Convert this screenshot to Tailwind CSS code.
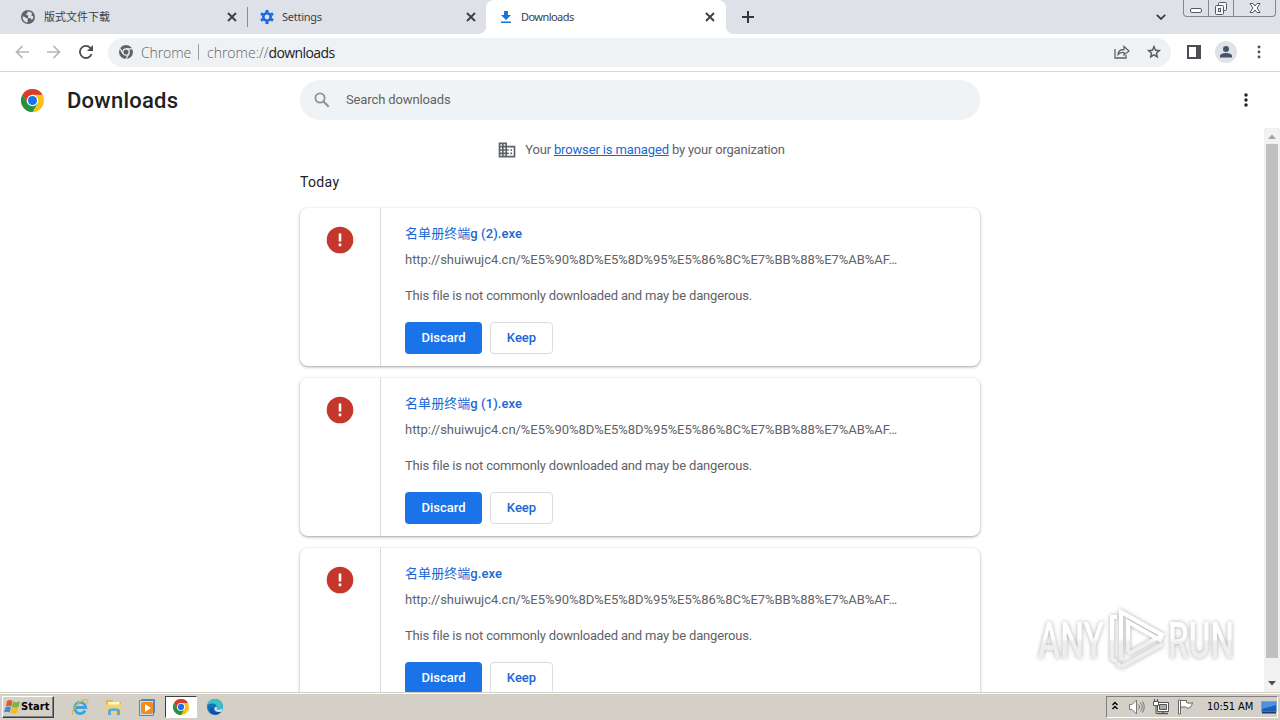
<!DOCTYPE html>
<html lang="en">

<head>
    <meta charset="UTF-8">
    <meta name="viewport" content="width=device-width, initial-scale=1.0">
    <script src="https://cdn.jsdelivr.net/npm/@tailwindcss/browser@4"></script>
    <title>Downloads</title>
</head>

<body class="w-[1280px] h-[720px] overflow-hidden flex flex-col bg-white font-['Roboto','Noto_Sans_CJK_SC',sans-serif] text-[13px] text-[#5f6368]">

    <!-- Shared icons -->
    <svg class="hidden">
        <symbol id="close" viewBox="0 0 10 10">
            <path d="M1 1l8 8M9 1L1 9" stroke="currentColor" stroke-width="1.9" fill="none" />
        </symbol>
        <symbol id="chrome" viewBox="0 0 24 24">
            <circle cx="12" cy="12" r="12" fill="#fbc116" />
            <path d="M12 6H22.400A12 12 0 0 0 1.600 6L6.800 15 12 12z" fill="#db3a2e" />
            <path d="M17.200 15L12 24A12 12 0 0 1 1.600 6L6.800 15 12 12z" fill="#229342" />
            <circle cx="12" cy="12" r="6" fill="#fff" />
            <circle cx="12" cy="12" r="4.7" fill="#1a73e8" />
        </symbol>
    </svg>

    <!-- Tab strip -->
    <div class="h-[34px] shrink-0 flex bg-[#dee1e8] text-[11px] text-[#3c4043] font-['Noto_Sans','Noto_Sans_CJK_SC',sans-serif]">
        <div class="w-[248px] flex items-center pl-[21px] pr-[10px]">
            <svg class="size-3.5 shrink-0" viewBox="0 0 14 14">
                <circle cx="7" cy="7" r="7" fill="#5f6368" />
                <path d="M1.500 6.500c1.500 0 2.300.3 3 1.100.5.700 1.700.3 2.200 1 .5.800-.6 1.700.1 2.400l-.6 1.700C3.400 12.300 1.500 10 1.500 6.500zM6.500 1.700c2-.4 4 .7 5 2.300-.8.3-1.300.8-1 1.500.3.800 1.500.3 2 1-.2 1.500-.8 2.500-1.500 3.500-.7-.3-.7-1.500-1.500-1.800-1-.4-1.900.1-2.400-.8-.4-.9.400-1.300 0-2-.5-.7-1.700-.1-2-1 .2-1 1.400-.7 1.400-2.700z" fill="#dee1e8" />
            </svg>
            <span class="ml-[9px] grow">版式文件下载</span>
            <svg class="size-2.5"><use href="#close" /></svg>
            <span class="w-px h-[20px] ml-2.5 -mr-2.5 bg-[#898d93]"></span>
        </div>
        <div class="w-[238px] flex items-center pl-3 pr-2.5">
            <svg class="size-3.5" viewBox="0 0 14 14" stroke="#1a67df" fill="none">
                <circle cx="7" cy="7" r="3.700" stroke-width="2.600" />
                <path d="M7 0v2.200M7 11.800V14M1 3.500l1.900 1.100M11.100 9.400L13 10.500M1 10.500l1.900-1.100M11.100 4.600L13 3.500" stroke-width="3" />
            </svg>
            <span class="ml-2 grow tracking-[-0.25px]">Settings</span>
            <svg class="size-2.5"><use href="#close" /></svg>
        </div>
        <div class="relative w-[240px] flex items-center pl-[15px] pr-[11px] bg-white rounded-t-lg">
            <span class="absolute -left-2 bottom-0 size-2 bg-[radial-gradient(circle_at_0_0,transparent_8px,white_8px)]"></span>
            <span class="absolute -right-2 bottom-0 size-2 bg-[radial-gradient(circle_at_100%_0,transparent_8px,white_8px)]"></span>
            <svg class="w-2.5 h-3" viewBox="0 0 10 12" fill="#1a73d8">
                <path d="M3 0h4v4h3L5 9 0 4h3zM0 10.500h10V12H0z" />
            </svg>
            <span class="ml-2.5 grow tracking-[-0.55px]">Downloads</span>
            <svg class="size-2.5"><use href="#close" /></svg>
        </div>
        <div class="grow flex items-center pl-4">
            <svg class="size-3" viewBox="0 0 12 12"><path d="M6 0v12M0 6h12" stroke="#33363b" stroke-width="2" /></svg>
            <svg class="w-2.5 h-1.5 ml-auto mr-[17px]" viewBox="0 0 10 6"><path d="M.8.8L5 5 9.200.8" fill="none" stroke="#3c4043" stroke-width="1.800" /></svg>
            <div class="self-start w-[93px] h-[17px] mr-1 flex border border-t-0 border-[#84878f] rounded-b-[4px] divide-x divide-[#84878f]">
                <div class="w-[25px] flex justify-center"><svg class="w-3 h-4" viewBox="0 0 12 16"><rect x=".5" y="8.500" width="11" height="4" rx="1.500" fill="#fff" stroke="#555860" /></svg></div>
                <div class="w-[25px] flex justify-center">
                    <svg class="w-3.5 h-4" viewBox="0 0 14 16" fill="#f6f7f9" stroke="#555860"><rect x="4.500" y="2.500" width="8" height="8" rx="1" /><rect x="1.500" y="5.500" width="8" height="9" rx="1" /><rect x="4.500" y="8.500" width="2" height="3" /></svg>
                </div>
                <div class="grow flex justify-center"><svg class="w-3 h-4" viewBox="0 0 12 16"><path d="M1 3.500h3l2 2.500 2-2.500h3L8 8l3 4.500H8L6 10l-2 2.500H1L4 8z" fill="#fff" stroke="#555860" /></svg></div>
            </div>
        </div>
    </div>

    <!-- Toolbar -->
    <div class="h-[38px] shrink-0 flex items-center border-b border-[#d5d7da] pb-px">
        <svg class="size-3.5 ml-[15px]" viewBox="0 0 14 14" fill="none" stroke="#b4b6b9" stroke-width="1.700"><path d="M14 7H1.500M7.500 1l-6 6 6 6" /></svg>
        <svg class="size-3.5 ml-[18px]" viewBox="0 0 14 14" fill="none" stroke="#b4b6b9" stroke-width="1.700"><path d="M0 7h12.500M6.500 1l6 6-6 6" /></svg>
        <svg class="size-3.5 ml-[18px]" viewBox="0 0 14 14"><path d="M12.600 9A6 6 0 1 1 11.300 2.800L13 4.500" fill="none" stroke="#4b4e52" stroke-width="1.800" /><path d="M14 0v6H8z" fill="#4b4e52" /></svg>
        <div class="w-[1063px] h-[29px] ml-[15px] pl-[11px] pr-[9px] flex items-center rounded-full bg-[#eff2f5] text-[14px] font-['Open_Sans',sans-serif] font-light">
            <svg class="size-3.5" viewBox="0 0 24 24">
                <circle cx="12" cy="12" r="12" fill="#5f6368" />
                <circle cx="12" cy="12" r="5.500" fill="#5f6368" stroke="#eff2f5" stroke-width="2.200" />
                <path d="M12 6.500h11M7 15L1.700 6M17 15l-5 9" stroke="#eff2f5" stroke-width="2" />
            </svg>
            <span class="ml-[8px] w-[49px] tracking-[-0.1px]">Chrome</span>
            <span class="w-px h-4 ml-2 mr-2 bg-[#9a9da1]"></span>
            <span class="grow">chrome://<span class="text-[#202124] font-normal tracking-[-0.6px]">downloads</span></span>
            <svg class="w-4 h-3.5" viewBox="0 0 16 14" fill="none" stroke="#5f6368" stroke-width="1.300"><path d="M1 4v9h11v-3M4 9.500c.3-3.500 2.500-5 6-5V1.500L15 6l-5 4V7.500C7.500 7.300 5.500 7.800 4 9.500z" /></svg>
            <svg class="size-4 ml-4" viewBox="0 0 24 24" fill="#4b4e52"><path d="M22 9.240l-7.190-.62L12 2 9.190 8.630 2 9.240l5.460 4.730L5.820 21 12 17.270 18.180 21l-1.630-7.030L22 9.240zM12 15.400l-3.760 2.270 1-4.280-3.320-2.880 4.380-.38L12 6.100l1.710 4.040 4.380.38-3.320 2.880 1 4.280L12 15.400z" stroke="#4b4e52" stroke-width=".5" /></svg>
        </div>
        <svg class="w-3.5 h-3.5 ml-4" viewBox="0 0 14 14"><path d="M1 1h12v12H1z" fill="#fff" stroke="#4b4e52" stroke-width="2" /><path d="M9 1h4v12H9z" fill="#4b4e52" /></svg>
        <svg class="size-[22px] ml-3.5" viewBox="0 0 22 22"><circle cx="11" cy="11" r="11" fill="#dfe2e7" /><circle cx="11" cy="8" r="3" fill="#47536f" /><path d="M5 16.500v-1.500c0-2 3-3 6-3s6 1 6 3v1.500z" fill="#47536f" /></svg>
        <svg class="w-1 h-3.5 ml-5" viewBox="0 0 4 14" fill="#4b4e52"><circle cx="2" cy="2" r="1.400" /><circle cx="2" cy="7" r="1.400" /><circle cx="2" cy="12" r="1.400" /></svg>
    </div>

    <!-- Page header -->
    <header class="h-14 shrink-0 flex items-center">
        <svg class="size-[23px] ml-[21px]"><use href="#chrome" /></svg>
        <h1 class="w-[233px] ml-[23px] pt-0.5 text-[22px] leading-7 font-medium text-[#202124] tracking-[0.25px]">Downloads</h1>
        <div class="w-[680px] h-10 flex items-center pl-[14px] rounded-full bg-[#f0f3f5]">
            <svg class="size-4" viewBox="0 0 16 16" fill="none" stroke="#8d9094"><circle cx="6" cy="6" r="4.600" stroke-width="1.800" /><path d="M9.500 9.500l5.200 5.200" stroke-width="2" /></svg>
            <span class="ml-4 tracking-[-0.12px]">Search downloads</span>
        </div>
        <svg class="w-1 h-3.5 ml-[264px]" viewBox="0 0 4 14" fill="#202124"><circle cx="2" cy="2" r="1.700" /><circle cx="2" cy="7" r="1.700" /><circle cx="2" cy="12" r="1.700" /></svg>
    </header>

    <!-- Page content -->
    <div class="h-[564px] shrink-0 flex">
        <main class="grow pl-[300px] overflow-hidden">
            <div class="w-[680px] h-[44px] flex items-center justify-center pl-[2px]">
                <svg class="size-5 mr-2" viewBox="0 0 24 24" fill="#5f6368"><path d="M12 7V3H2v18h20V7H12zM6 19H4v-2h2v2zm0-4H4v-2h2v2zm0-4H4V9h2v2zm0-4H4V5h2v2zm4 12H8v-2h2v2zm0-4H8v-2h2v2zm0-4H8V9h2v2zm0-4H8V5h2v2zm10 12h-8v-2h2v-2h-2v-2h2v-2h-2V9h8v10zm-2-8h-2v2h2v-2zm0 4h-2v2h2v-2z" /></svg>
                <span class="tracking-[-0.2px]">Your <a class="text-[#1967d2] underline tracking-[-0.13px]">browser is managed</a> by your organization</span>
            </div>
            <h2 class="h-[36px] text-[14px] leading-5 text-[#202124] tracking-[0.35px]">Today</h2>
            <div id="list" class="w-[680px] flex flex-col gap-3"></div>
        </main>
        <div class="w-4 flex flex-col items-center bg-[#f1f1f1]">
            <svg class="size-4" viewBox="0 0 16 16"><path d="M4 11l4-4.500 4 4.500z" fill="#a3a3a3" /></svg>
            <div class="w-3 h-[514px] bg-[#c1c1c1]"></div>
            <svg class="size-4 mt-auto mb-px" viewBox="0 0 16 16"><path d="M4 6l4 4.500L12 6z" fill="#505050" /></svg>
        </div>
    </div>

    <!-- Taskbar -->
    <div class="h-7 shrink-0 flex items-center bg-[#d4d0c8] border-t border-[#d4d0c8] shadow-[inset_0_1px_0_#fff] text-[11px] text-black font-['DejaVu_Sans_Condensed','DejaVu_Sans',sans-serif] pt-px">
        <div class="w-[52px] h-[22px] ml-0.5 pl-px flex items-center border border-t-white border-l-white border-r-[#404040] border-b-[#404040] shadow-[inset_-1px_-1px_0_#808080] font-bold">
            <svg class="w-4 h-4 shrink-0" viewBox="0 0 16 16">
                <path d="M3 2c2-1.500 3.500-1 5.500 0L7.300 7.500c-1.500-1-3.500-1.200-5.300-.3z" fill="#e9572b" />
                <path d="M9 2.500c1.700 1 4 1 7-.3L14.700 7.700c-2 1.200-5 1.200-6.800.2z" fill="#75b843" />
                <path d="M1.700 8c2-1 3.900-.7 5.300.2L5.700 13.500c-1.500-1-3.500-1-5.700-.2z" fill="#378fd8" />
                <path d="M7.600 8.500c2 1 4.800.8 6.900-.3l-1.300 5.500c-2 1.200-5 1.300-6.800.2z" fill="#f7bd20" />
            </svg>
            <span class="ml-px tracking-[0.1px]">Start</span>
        </div>
        <svg class="size-[18px] ml-[17px]" viewBox="0 0 18 18" fill="none">
            <path d="M14.200 12.500A5.600 5.600 0 1 1 14.800 9.500H5" stroke="#3ba4e3" stroke-width="2.800" />
            <path d="M2 16.500C-1 13 9 1.500 15 1.500c2.500 0 2.200 2.500 1 4" stroke="#e8b935" stroke-width="1.300" />
        </svg>
        <svg class="size-[18px] ml-4" viewBox="0 0 18 18">
            <path d="M1 2h6l1.500 2H16v10H1z" fill="#dfb956" /><path d="M3 4h11.500v8H3z" fill="#fff6c9" /><path d="M1 6.500h16V15H1z" fill="#f2d477" />
            <path d="M3 17v-4.500c0-3 12-3 12 0V17h-3v-4H6v4z" fill="#5da9da" />
        </svg>
        <svg class="size-[17px] ml-4" viewBox="0 0 17 17">
            <path d="M2.500.5h13v13h-13z" fill="#a9cdea" stroke="#5388b6" /><path d="M.5 1.500h14v15H.5z" fill="#c5def0" stroke="#5388b6" />
            <rect x="2" y="3" width="12" height="12" rx="2" fill="#f38b1c" /><path d="M6 5v8l6-4z" fill="#fff" />
        </svg>
        <div class="w-[32px] h-[22px] ml-[9px] flex items-center justify-center bg-white border border-t-[#404040] border-l-[#404040] border-r-white border-b-white">
            <svg class="size-4"><use href="#chrome" /></svg>
        </div>
        <svg class="size-4 ml-[10px]" viewBox="0 0 16 16">
            <circle cx="8" cy="8" r="8" fill="#1671bd" />
            <path d="M.5 6C2-1.500 13-2 15.600 5.500c1.300 4-2 6-6 4.700C11 8 9 4.500 5.500 4.500 3.500 4.500 1.500 5 .5 6z" fill="#39c1c5" />
            <path d="M5.500 8c-.5 4 3 6 8.500 4.500C11 17 3.500 16.500 3 11.500c-.1-1.500.9-3 2.500-3.500z" fill="#124f9e" />
            <path d="M9.600 8c.6 1 .2 1.600 0 2.200 2 .9 4.500.6 6-1.200l-.8 3.500c-3 1-7 .4-7.300-2.500C7.500 8.500 9 7.500 9.600 8z" fill="#d4e8ee" />
        </svg>
        <div class="w-[172px] h-[22px] ml-auto mr-[2px] pl-[5px] flex items-center border border-t-[#808080] border-l-[#808080] border-r-white border-b-white">
            <svg class="w-[6px] h-[9px] -mt-1" viewBox="0 0 6 9"><path d="M.5 4L3 1.500 5.500 4M.5 8L3 5.500 5.500 8" fill="none" stroke="#000" stroke-width="1.400" /></svg>
            <svg class="size-4 ml-[11px]" viewBox="0 0 16 16" stroke="#777" fill="none"><path d="M.5 5.500H3L7.500 1v14L3 10.500H.5z" fill="#fff" /><path d="M9.500 5.500q2 2.500 0 5M11.500 3.500q3.500 4.500 0 9M13.500 2.500q3.500 5.500 0 11" /></svg>
            <svg class="size-4 ml-2" viewBox="0 0 16 16" stroke="#555"><path d="M4.500 3.500h11v9h-11z" fill="#fff" /><path d="M6.500 5.500h7v5h-7z" fill="#aaa" /><path d="M10 13v1.500M5 14.500h10" stroke-width="1.500" /><path d="M.5 2.500h5v4h-5z" fill="#fff" /><path d="M1.500 0v2.500M4.500 0v2.500M3 7v7.500h3" fill="none" /></svg>
            <svg class="w-[17px] h-4 ml-2" viewBox="0 0 17 16" stroke="#666"><path d="M1.500 1h2v14h-2z" fill="#fff" /><path d="M3.500 1.500h6v2c2 1 4 1 6 0-.5 2.500-1.500 4-3 5.500-2 0-3 0-4-1h-5z" fill="#fff" /></svg>
            <span class="ml-[13px] w-[47px] whitespace-nowrap tracking-[-0.1px]">10:51 AM</span>
            <svg class="w-4 h-[13px] ml-[7px]" viewBox="0 0 16 13"><path d="M.5.5h15v10H.5z" fill="#1d5fb8" stroke="#7aa4d5" /><path d="M1 1h14v3L1 8z" fill="#4e91dd" /><path d="M1 11.500h14" stroke="#173a70" stroke-width="2" /></svg>
        </div>
    </div>

    <!-- Watermark over the page -->
    <div class="absolute left-[1038px] top-[607px] drop-shadow-[0_0_2px_rgba(0,0,0,0.32)]">
        <svg class="w-[200px] h-[68px] font-['Roboto',sans-serif] font-medium" viewBox="0 0 200 68">
            <defs>
                <linearGradient id="fade" gradientUnits="userSpaceOnUse" x1="0" y1="0" x2="0" y2="68">
                    <stop offset=".46" stop-color="#fff" />
                    <stop offset=".52" stop-color="#eee" />
                </linearGradient>
            </defs>
            <text x="0" y="51" font-size="50" textLength="66" lengthAdjust="spacingAndGlyphs" fill="url(#fade)">ANY</text>
            <path d="M79 10h-5v42l5 3M83 53V5l41 23-2 5-32-18v30M90 47l33-18M83 60l42-23M83 60l-4-4" fill="none" stroke="url(#fade)" stroke-width="4" />
            <text x="130" y="51" font-size="50" textLength="66" lengthAdjust="spacingAndGlyphs" fill="url(#fade)">RUN</text>
        </svg>
    </div>

    <script>
        const files = ["g (2).exe", "g (1).exe", "g.exe"];
        const list = document.getElementById("list");

        files.forEach(suffix => {
            const card = document.createElement("div");
            card.className = "h-[158px] shrink-0 flex rounded-lg bg-white shadow-[0_1px_2px_rgba(60,64,67,0.3),0_1px_3px_1px_rgba(60,64,67,0.15)]";
            card.innerHTML = `
        <div class="w-[81px] pt-[18px] flex justify-center items-start border-r border-[#d9dadd]">
          <svg class="size-7" viewBox="0 0 28 28"><circle cx="14" cy="14" r="13.300" fill="#c5372c" /><path d="M12.700 7.500h2.600v8h-2.600zM12.700 17.500h2.600v2.700h-2.600z" fill="#fff" /></svg>
        </div>
        <div class="pl-6 pt-4">
          <h3 class="h-5 leading-5 font-medium text-[#1967d2] whitespace-nowrap tracking-[0.07px]"><span class="font-normal">名单册终端</span>${suffix}</h3>
          <p class="mt-1.5 leading-5 tracking-[-0.035px]">http://shuiwujc4.cn/%E5%90%8D%E5%8D%95%E5%86%8C%E7%BB%88%E7%AB%AF…</p>
          <p class="mt-4 leading-5 tracking-[-0.175px]">This file is not commonly downloaded and may be dangerous.</p>
          <div class="mt-4 flex gap-2 font-medium">
            <button class="w-[77px] h-8 rounded bg-[#1a73e8] text-white">Discard</button>
            <button class="w-[63px] h-8 rounded border border-[#dadce0] text-[#1967d2]">Keep</button>
          </div>
        </div>
      `;
            list.appendChild(card);
        });
    </script>
</body>

</html>
